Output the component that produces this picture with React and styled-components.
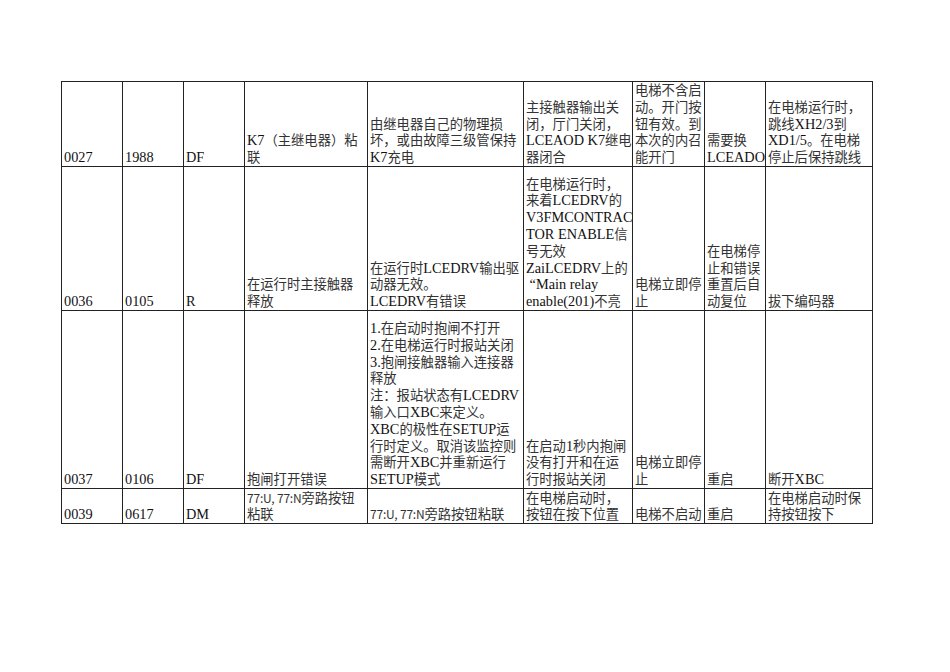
import React from "react";
import styled, { createGlobalStyle } from "styled-components";

const GlobalStyle = createGlobalStyle`
  html, body {
    margin: 0;
    padding: 0;
    background: #fff;
  }
`;

const columns = [61, 61, 61, 123, 156, 109, 72, 61, 107];

const rows = [
  {
    height: 84,
    cells: [
      ["0027"],
      ["1988"],
      ["DF"],
      ["K7（主继电器）粘", "联"],
      ["由继电器自己的物理损", "坏，或由故障三级管保持", "K7充电"],
      ["主接触器输出关", "闭，厅门关闭，", "LCEAOD K7继电", "器闭合"],
      ["电梯不含启", "动。开门按", "钮有效。到", "本次的内召", "能开门"],
      ["需要换", "LCEADO"],
      ["在电梯运行时，", "跳线XH2/3到", "XD1/5。在电梯", "停止后保持跳线"],
    ],
  },
  {
    height: 144,
    cells: [
      ["0036"],
      ["0105"],
      ["R"],
      ["在运行时主接触器", "释放"],
      ["在运行时LCEDRV输出驱", "动器无效。", "LCEDRV有错误"],
      [
        "在电梯运行时，",
        "来着LCEDRV的",
        "V3FMCONTRAC",
        "TOR ENABLE信",
        "号无效",
        "ZaiLCEDRV上的",
        "\u00a0“Main relay",
        "enable(201)不亮",
      ],
      ["电梯立即停", "止"],
      ["在电梯停", "止和错误", "重置后自", "动复位"],
      ["拔下编码器"],
    ],
  },
  {
    height: 178,
    cells: [
      ["0037"],
      ["0106"],
      ["DF"],
      ["抱闸打开错误"],
      [
        "1.在启动时抱闸不打开",
        "2.在电梯运行时报站关闭",
        "3.抱闸接触器输入连接器",
        "释放",
        "注：报站状态有LCEDRV",
        "输入口XBC来定义。",
        "XBC的极性在SETUP运",
        "行时定义。取消该监控则",
        "需断开XBC并重新运行",
        "SETUP模式",
      ],
      ["在启动1秒内抱闸", "没有打开和在运", "行时报站关闭"],
      ["电梯立即停", "止"],
      ["重启"],
      ["断开XBC"],
    ],
  },
  {
    height: 35,
    tight: true,
    cells: [
      ["0039"],
      ["0617"],
      ["DM"],
      [{ mono: "77:U, 77:N", rest: "旁路按钮" }, "粘联"],
      [{ mono: "77:U, 77:N", rest: "旁路按钮粘联" }],
      ["在电梯启动时，", "按钮在按下位置"],
      ["电梯不启动"],
      ["重启"],
      ["在电梯启动时保", "持按钮按下"],
    ],
  },
];

// split a string into runs of CJK and latin text
function splitRuns(text) {
  return text.match(/[\u3000-\u9fff\uff00-\uffef]+|[^\u3000-\u9fff\uff00-\uffef]+/g) || [];
}

function Runs({ text }) {
  return splitRuns(text).map((run, i) =>
    /[\u3000-\u9fff\uff00-\uffef]/.test(run) ? <Cjk key={i}>{run}</Cjk> : <span key={i}>{run}</span>
  );
}

function Line({ value }) {
  if (typeof value === "string") {
    return (
      <TextLine>
        <Runs text={value} />
      </TextLine>
    );
  }
  return (
    <TextLine>
      <Mono>{value.mono}</Mono>
      <Runs text={value.rest} />
    </TextLine>
  );
}

export default function App() {
  return (
    <>
      <GlobalStyle />
      <Page>
        <Table>
          <colgroup>
            {columns.map((w, i) => (
              <col key={i} style={{ width: w }} />
            ))}
          </colgroup>
          <tbody>
            {rows.map((row, r) => (
              <tr key={r} style={{ height: row.height }}>
                {row.cells.map((lines, c) => (
                  <Cell key={c} $tight={row.tight}>
                    {lines.map((l, i) => (
                      <Line key={i} value={l} />
                    ))}
                  </Cell>
                ))}
              </tr>
            ))}
          </tbody>
        </Table>
      </Page>
    </>
  );
}

const Page = styled.div`
  padding: 81px 0 0 61px;
  width: 950px;
  height: 672px;
  box-sizing: border-box;
`;

const Table = styled.table`
  border-collapse: collapse;
  table-layout: fixed;
  width: 812px;
  font-family: "Liberation Serif", "Noto Sans CJK SC", serif;
  font-size: 14.3px;
  color: #111;
`;

const Cell = styled.td`
  border: 1px solid #222;
  vertical-align: bottom;
  text-align: left;
  padding: 0 1px 0 2px;
  line-height: ${(p) => (p.$tight ? "15.5px" : "16.8px")};
  overflow: hidden;
`;

const TextLine = styled.div`
  white-space: nowrap;
`;

const Cjk = styled.span`
  font-family: "Noto Sans CJK SC", sans-serif;
  font-size: 13.3px;
  color: #333;
`;

const Mono = styled.span`
  font-family: "Noto Sans CJK SC", sans-serif;
  font-size: 12px;
  color: #333;
  letter-spacing: -0.2px;
`;
